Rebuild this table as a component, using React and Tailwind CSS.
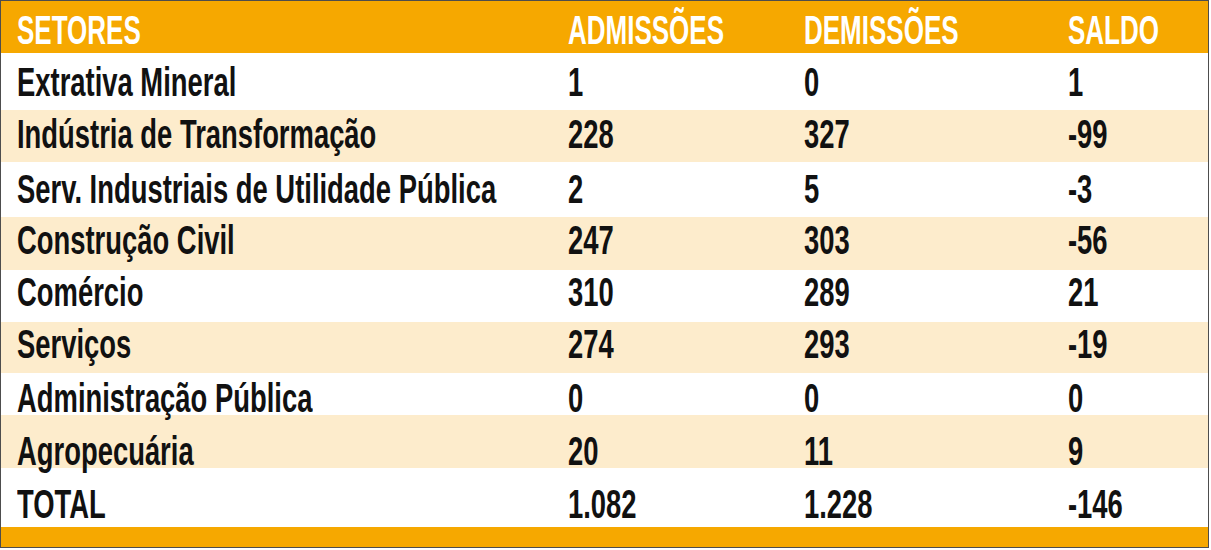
const head = ['SETORES', 'ADMISSÕES', 'DEMISSÕES', 'SALDO'];

const rows = [
  { cells: ['Extrativa Mineral', '1', '0', '1'], h: 'h-[57px]', pt: 'pt-[9px]', bg: 'bg-white' },
  { cells: ['Indústria de Transformação', '228', '327', '-99'], h: 'h-[52px]', pt: 'pt-[4px]', bg: 'bg-[#fdeccc]' },
  { cells: ['Serv. Industriais de Utilidade Pública', '2', '5', '-3'], h: 'h-[55px]', pt: 'pt-[7px]', bg: 'bg-white' },
  { cells: ['Construção Civil', '247', '303', '-56'], h: 'h-[53px]', pt: 'pt-[3px]', bg: 'bg-[#fdeccc]' },
  { cells: ['Comércio', '310', '289', '21'], h: 'h-[52px]', pt: 'pt-[2px]', bg: 'bg-white' },
  { cells: ['Serviços', '274', '293', '-19'], h: 'h-[51px]', pt: 'pt-[2px]', bg: 'bg-[#fdeccc]' },
  { cells: ['Administração Pública', '0', '0', '0'], h: 'h-[42px]', pt: 'pt-[5px]', bg: 'bg-white' },
  { cells: ['Agropecuária', '20', '11', '9'], h: 'h-[53px]', pt: 'pt-[16px]', bg: 'bg-[#fdeccc]' },
  { cells: ['TOTAL', '1.082', '1.228', '-146'], h: 'h-[59px]', pt: 'pt-[16px]', bg: 'bg-white' },
];

const cols = ['w-[567px] pl-4', 'w-[236px]', 'w-[264px]', 'flex-1'];

function Cell({ className, scale, children }) {
  return (
    <div className={className}>
      <span className={`inline-block origin-left whitespace-nowrap ${scale}`}>{children}</span>
    </div>
  );
}

export default function App() {
  return (
    <div className="w-[1209px] h-[548px] border border-[#4d4d4d] bg-white flex flex-col font-['Liberation_Sans',Arial,sans-serif] font-bold text-[40px] leading-[40px] text-[#111]">
      <div className="flex h-[52px] pt-[9px] bg-[#f6a800] text-white">
        {head.map((t, i) => (
          <Cell key={t} className={cols[i]} scale="scale-x-[0.65]">
            {t}
          </Cell>
        ))}
      </div>
      {rows.map((r) => (
        <div key={r.cells[0]} className={`flex shrink-0 ${r.h} ${r.pt} ${r.bg}`}>
          {r.cells.map((t, i) => (
            <Cell key={i} className={cols[i]} scale="scale-x-[0.685]">
              {t}
            </Cell>
          ))}
        </div>
      ))}
      <div className="h-[20px] shrink-0 bg-[#f6a800]" />
    </div>
  );
}
